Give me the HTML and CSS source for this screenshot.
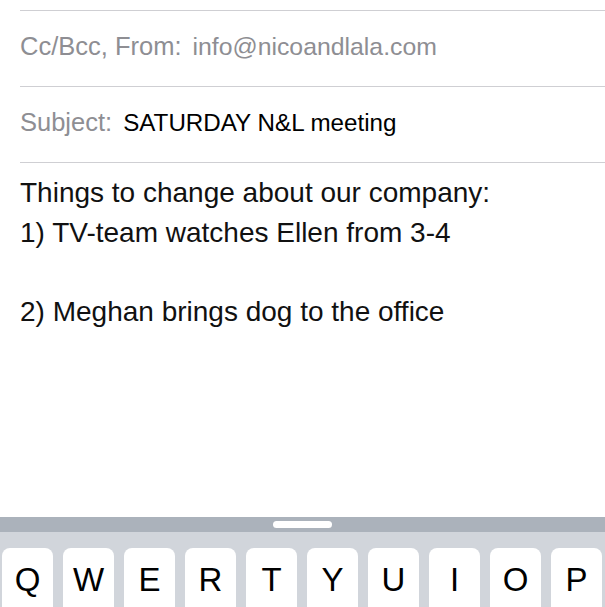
FILE: index.html
```html
<!DOCTYPE html>
<html>
<head>
<meta charset="utf-8">
<link rel="stylesheet" href="styles.css">
</head>
<body>
<div class="compose">
  <div class="top-gap"></div>
  <div class="row"><span class="label">Cc/Bcc, From:</span><span class="from">info@nicoandlala.com</span></div>
  <div class="row"><span class="label">Subject:</span><span class="value">SATURDAY N&amp;L meeting</span></div>
  <div class="body">
    <div class="line">Things to change about our company:</div>
    <div class="line">1) TV-team watches Ellen from 3-4</div>
    <div class="line">&nbsp;</div>
    <div class="line">2) Meghan brings dog to the office</div>
  </div>
</div>
<div class="keyboard">
  <div class="grabber"><div class="pill"></div></div>
  <div class="keys">
    <div class="key">Q</div>
    <div class="key">W</div>
    <div class="key">E</div>
    <div class="key">R</div>
    <div class="key">T</div>
    <div class="key">Y</div>
    <div class="key">U</div>
    <div class="key">I</div>
    <div class="key">O</div>
    <div class="key">P</div>
  </div>
</div>
</body>
</html>
```

FILE: styles.css
```css
html, body {
  margin: 0;
  padding: 0;
  height: 607px;
  overflow: hidden;
  background: #ffffff;
}
body {
  display: flex;
  flex-direction: column;
  font-family: "Liberation Sans", Arial, sans-serif;
  color: #000;
}
.compose {
  flex: 1;
  display: flex;
  flex-direction: column;
  padding-left: 20px;
}
.top-gap {
  height: 10px;
}
.row {
  border-top: 1px solid #cfcfd3;
  height: 71px;
  padding-bottom: 4px;
  line-height: 71px;
  font-size: 24.8px;
  white-space: nowrap;
}
.body {
  border-top: 1px solid #cfcfd3;
  padding-top: 10px;
  flex: 1;
  font-size: 28px;
  line-height: 39.7px;
  color: #111;
}
.label {
  color: #8e8e93;
  font-size: 25.5px;
  margin-right: 11px;
}
.from {
  color: #8e8e93;
}
.value {
  color: #000;
  font-size: 24.2px;
}
.keyboard {
  flex: none;
  height: 90px;
  background: #d1d5db;
}
.grabber {
  height: 15px;
  background: #abb2bb;
  display: flex;
  align-items: center;
  justify-content: center;
}
.pill {
  width: 59px;
  height: 7px;
  border-radius: 4px;
  background: #ffffff;
}
.keys {
  display: grid;
  grid-template-columns: repeat(10, 51px);
  column-gap: 10px;
  padding: 16px 3px 0 2px;
}
.key {
  height: 86px;
  background: #ffffff;
  border-radius: 8px;
  text-align: center;
  font-size: 33px;
  line-height: 1;
  padding-top: 15px;
  box-sizing: border-box;
  color: #000;
}
```
